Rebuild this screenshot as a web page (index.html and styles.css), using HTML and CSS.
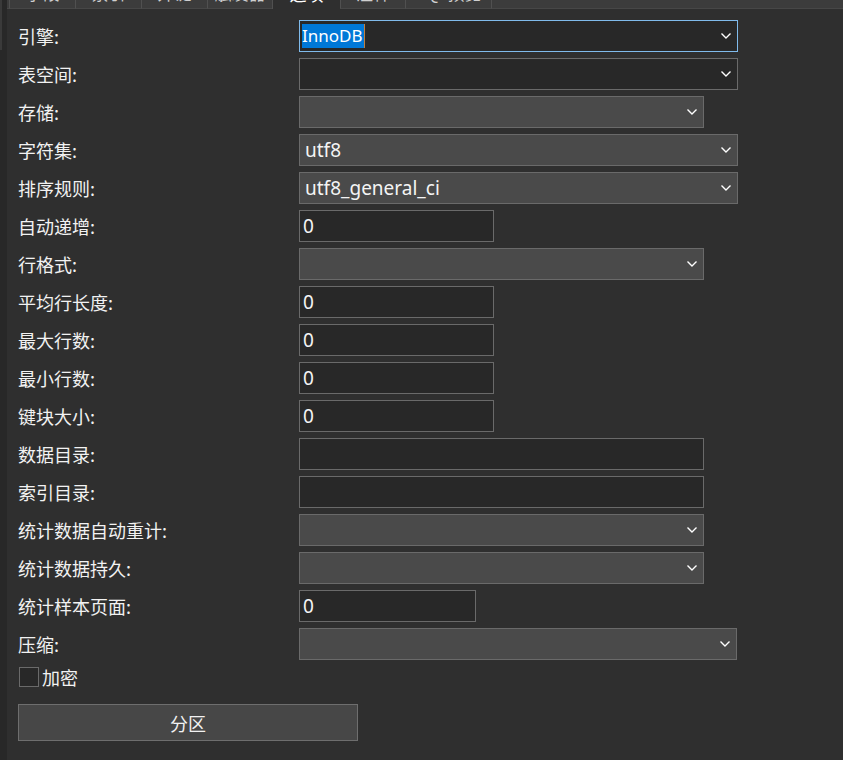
FILE: index.html
```html
<!DOCTYPE html>
<html lang="zh-CN">
<head>
<meta charset="utf-8">
<title>选项</title>
<link rel="stylesheet" href="styles.css">
</head>
<body>
<div class="window">
  <div class="side"><div class="side-top"></div></div>
  <div class="main">
    <div class="tabbar">
      <div class="tab-pad"></div>
      <div class="tab t66">字段</div>
      <div class="tab t66">索引</div>
      <div class="tab t66">外键</div>
      <div class="tab t65">触发器</div>
      <div class="tab t68 active">选项</div>
      <div class="tab t65">注释</div>
      <div class="tab t87">SQL预览</div>
      <div class="tab-fill"></div>
    </div>
    <div class="form">
      <div class="row"><span class="label">引擎:</span>
        <div class="ctl dark focus w439"><span class="text"><span class="hl">InnoDB</span><span class="caret"></span></span><svg class="chev" viewBox="0 0 10 6"><polyline points="0.5,0.5 5,5 9.5,0.5"/></svg></div></div>
      <div class="row"><span class="label">表空间:</span>
        <div class="ctl dark w439"><span class="text"></span><svg class="chev" viewBox="0 0 10 6"><polyline points="0.5,0.5 5,5 9.5,0.5"/></svg></div></div>
      <div class="row"><span class="label">存储:</span>
        <div class="ctl grey w405"><span class="text"></span><svg class="chev" viewBox="0 0 10 6"><polyline points="0.5,0.5 5,5 9.5,0.5"/></svg></div></div>
      <div class="row"><span class="label">字符集:</span>
        <div class="ctl grey w439"><span class="text">utf8</span><svg class="chev" viewBox="0 0 10 6"><polyline points="0.5,0.5 5,5 9.5,0.5"/></svg></div></div>
      <div class="row"><span class="label">排序规则:</span>
        <div class="ctl grey w439"><span class="text">utf8_general_ci</span><svg class="chev" viewBox="0 0 10 6"><polyline points="0.5,0.5 5,5 9.5,0.5"/></svg></div></div>
      <div class="row"><span class="label">自动递增:</span>
        <div class="ctl dark input w195"><span class="text">0</span></div></div>
      <div class="row"><span class="label">行格式:</span>
        <div class="ctl grey w405"><span class="text"></span><svg class="chev" viewBox="0 0 10 6"><polyline points="0.5,0.5 5,5 9.5,0.5"/></svg></div></div>
      <div class="row"><span class="label">平均行长度:</span>
        <div class="ctl dark input w195"><span class="text">0</span></div></div>
      <div class="row"><span class="label">最大行数:</span>
        <div class="ctl dark input w195"><span class="text">0</span></div></div>
      <div class="row"><span class="label">最小行数:</span>
        <div class="ctl dark input w195"><span class="text">0</span></div></div>
      <div class="row"><span class="label">键块大小:</span>
        <div class="ctl dark input w195"><span class="text">0</span></div></div>
      <div class="row"><span class="label">数据目录:</span>
        <div class="ctl dark input w405"><span class="text"></span></div></div>
      <div class="row"><span class="label">索引目录:</span>
        <div class="ctl dark input w405"><span class="text"></span></div></div>
      <div class="row"><span class="label">统计数据自动重计:</span>
        <div class="ctl grey w405"><span class="text"></span><svg class="chev" viewBox="0 0 10 6"><polyline points="0.5,0.5 5,5 9.5,0.5"/></svg></div></div>
      <div class="row"><span class="label">统计数据持久:</span>
        <div class="ctl grey w405"><span class="text"></span><svg class="chev" viewBox="0 0 10 6"><polyline points="0.5,0.5 5,5 9.5,0.5"/></svg></div></div>
      <div class="row"><span class="label">统计样本页面:</span>
        <div class="ctl dark input w177"><span class="text">0</span></div></div>
      <div class="row"><span class="label">压缩:</span>
        <div class="ctl grey w438"><span class="text"></span><svg class="chev" viewBox="0 0 10 6"><polyline points="0.5,0.5 5,5 9.5,0.5"/></svg></div></div>
      <div class="check-row"><span class="box"></span><span class="check-label">加密</span></div>
      <div class="btn">分区</div>
    </div>
  </div>
</div>
</body>
</html>
```
FILE: styles.css
```css
html, body {
  margin: 0;
  padding: 0;
  background: #2f2f2f;
}
body {
  font-family: "Noto Sans", "Noto Sans CJK SC", sans-serif;
  color: #f2f2f2;
  width: 843px;
  height: 760px;
  overflow: hidden;
}
.window {
  display: flex;
  height: 760px;
}
.side {
  width: 7px;
  flex: none;
  background: #282828;
}
.side-top {
  width: 2px;
  height: 50px;
  background: #3a3a3a;
}
.main {
  flex: 1;
  display: flex;
  flex-direction: column;
}
.tabbar {
  display: flex;
  align-items: flex-end;
  height: 9px;
  overflow: hidden;
  background: #3c3c3c;
}
.tab-pad {
  width: 2px;
  height: 9px;
  box-sizing: border-box;
  border-bottom: 1px solid #474747;
  flex: none;
}
.tab {
  flex: none;
  height: 32px;
  box-sizing: border-box;
  border-left: 1px solid #505050;
  border-bottom: 1px solid #474747;
  display: flex;
  align-items: center;
  justify-content: center;
  font-family: "Noto Sans CJK SC", sans-serif;
  font-size: 17px;
  line-height: 24px;
  color: #cfcfcf;
  padding-top: 1px;
}
.tab.active {
  background: #2f2f2f;
  border-bottom: none;
  color: #ffffff;
}
.t65 { width: 65px; }
.t66 { width: 66px; }
.t68 { width: 68px; }
.t87 { width: 87px; border-right: 1px solid #505050; }
.tab-fill {
  flex: 1;
  height: 9px;
  box-sizing: border-box;
  border-bottom: 1px solid #474747;
}
.form {
  display: flex;
  flex-direction: column;
  gap: 6px;
  padding: 11px 0 0 11px;
}
.row {
  display: grid;
  grid-template-columns: 281px auto;
  align-items: center;
  height: 32px;
}
.label {
  font-family: "Noto Sans CJK SC", sans-serif;
  font-size: 18px;
  line-height: 24px;
  color: #f2f2f2;
  white-space: nowrap;
}
.ctl {
  box-sizing: border-box;
  height: 32px;
  border: 1px solid #6a6a6a;
  display: flex;
  align-items: center;
  justify-content: space-between;
  padding: 0 6px 0 5px;
}
.ctl.input {
  padding-left: 3px;
}
.dark { background: #282828; }
.grey { background: #4a4a4a; }
.focus { border-color: #80bbec; padding-left: 2px; }
.w439 { width: 439px; }
.w438 { width: 438px; }
.w405 { width: 405px; }
.w195 { width: 195px; }
.w177 { width: 177px; }
.text {
  font-size: 19px;
  line-height: 24px;
  color: #f4f4f4;
  display: flex;
  align-items: center;
  white-space: nowrap;
}
.hl {
  background: #0078d7;
  color: #ffffff;
  font-size: 17px;
  padding: 0 1px 0 0;
}
.caret {
  width: 1px;
  height: 24px;
  background: #c08040;
}
.chev {
  width: 10px;
  height: 6px;
  flex: none;
  fill: none;
  stroke: #ffffff;
  stroke-width: 1.4;
}
.check-row {
  display: flex;
  align-items: center;
  gap: 3px;
  margin-top: 0;
  height: 22px;
  padding-left: 1px;
}
.box {
  width: 20px;
  height: 20px;
  box-sizing: border-box;
  border: 1px solid #6a6a6a;
  background: #282828;
}
.check-label {
  font-family: "Noto Sans CJK SC", sans-serif;
  font-size: 18px;
  line-height: 24px;
}
.btn {
  margin-top: 10px;
  width: 340px;
  height: 37px;
  box-sizing: border-box;
  border: 1px solid #6e6e6e;
  background: #474747;
  display: flex;
  align-items: center;
  justify-content: center;
  font-family: "Noto Sans CJK SC", sans-serif;
  font-size: 18px;
  line-height: 24px;
}
```
